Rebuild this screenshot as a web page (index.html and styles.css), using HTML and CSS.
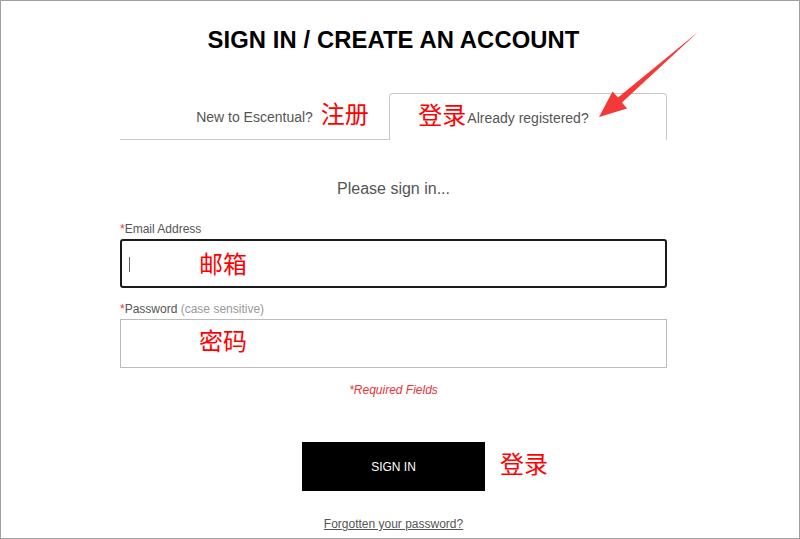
FILE: index.html
```html
<!DOCTYPE html>
<html>
<head>
<meta charset="utf-8">
<link rel="stylesheet" href="styles.css">
</head>
<body>
<div class="frame">
  <div class="panel">
    <h1 class="title">SIGN IN / CREATE AN ACCOUNT</h1>
    <div class="tabs">
      <div class="tab tab-new"><span class="tab-label">New to Escentual?<span class="note note-reg">注册</span></span></div>
      <div class="tab tab-active"><span class="tab-label"><span class="note note-login">登录</span>Already registered?</span></div>
    </div>
    <p class="intro">Please sign in...</p>
    <div class="field">
      <div class="label"><span class="req">*</span>Email Address</div>
      <div class="input input-focus"><span class="caret"></span><span class="note note-field">邮箱</span></div>
    </div>
    <div class="field field-pw">
      <div class="label"><span class="req">*</span>Password <span class="hint">(case sensitive)</span></div>
      <div class="input"><span class="note note-field">密码</span></div>
    </div>
    <p class="required">*Required Fields</p>
    <div class="actions">
      <div class="btn">SIGN IN<span class="note note-btn">登录</span></div>
    </div>
    <p class="forgot"><a href="#">Forgotten your password?</a></p>
  </div>
  <svg class="arrow" width="800" height="539" viewBox="0 0 800 539">
    <polygon points="698,32 618,97.5 612.5,91.5 599,117 627,108.5 622,102.5" fill="#f53838"/>
  </svg>
</div>
</body>
</html>
```

FILE: styles.css
```css
html, body {
  margin: 0;
  padding: 0;
  background: #fff;
}
body {
  font-family: "Liberation Sans", Arial, sans-serif;
  color: #555;
}
.frame {
  position: relative;
  width: 800px;
  height: 539px;
  box-sizing: border-box;
  border: 1px solid #a0a0a0;
  overflow: hidden;
}
.panel {
  width: 547px;
  margin-left: 119px;
  display: flex;
  flex-direction: column;
}
.title {
  margin: 26px 0 0;
  font-size: 23.8px;
  line-height: 26px;
  font-weight: bold;
  color: #000;
  text-align: center;
  letter-spacing: 0.1px;
}
.tabs {
  margin-top: 40px;
  display: flex;
  height: 47px;
}
.tab {
  box-sizing: border-box;
  display: flex;
  align-items: center;
  justify-content: center;
  font-size: 14px;
  color: #555;
}
.tab-new {
  width: 269px;
  border-bottom: 1px solid #c8c8c8;
  padding-top: 2px;
}
.tab-active {
  width: 278px;
  border: 1px solid #c8c8c8;
  border-bottom: none;
  border-radius: 4px 4px 0 0;
  padding-top: 1px;
}
.tab-label {
  position: relative;
}
.note {
  position: absolute;
  font-family: "Noto Sans CJK SC", sans-serif;
  font-size: 24px;
  line-height: 28px;
  color: #ff0000;
  white-space: nowrap;
}
.note-reg {
  left: calc(100% + 8px);
  top: -10px;
}
.note-login {
  right: calc(100% + 1px);
  top: -10px;
}
.intro {
  margin: 39px 0 0;
  font-size: 16px;
  line-height: 20px;
  text-align: center;
  color: #555;
}
.field {
  margin-top: 23px;
  display: flex;
  flex-direction: column;
}
.field-pw {
  margin-top: 14px;
}
.label {
  font-size: 12px;
  line-height: 14px;
  color: #555;
}
.req {
  color: #e8343a;
}
.hint {
  color: #999;
}
.input {
  position: relative;
  margin-top: 3px;
  height: 49px;
  box-sizing: border-box;
  border: 1px solid #bcbcbc;
}
.input-focus {
  border: 2px solid #1a1a1a;
  border-radius: 3px;
}
.caret {
  position: absolute;
  left: 7px;
  top: 16px;
  width: 1px;
  height: 15px;
  background: #666;
}
.note-field {
  left: 78px;
  top: 6px;
}
.input-focus .note-field {
  left: 77px;
  top: 8px;
}
.required {
  margin: 15px 0 0;
  font-size: 12px;
  line-height: 14px;
  font-style: italic;
  text-align: center;
  color: #e8343a;
}
.actions {
  margin-top: 45px;
  display: flex;
  justify-content: center;
}
.btn {
  position: relative;
  width: 183px;
  height: 49px;
  background: #000;
  color: #fff;
  font-size: 12px;
  display: flex;
  align-items: center;
  justify-content: center;
}
.note-btn {
  left: calc(100% + 15px);
  top: 7px;
}
.forgot {
  margin: 26px 0 0;
  font-size: 12px;
  line-height: 14px;
  text-align: center;
}
.forgot a {
  color: #555;
  text-decoration: underline;
}
.arrow {
  position: absolute;
  left: -1px;
  top: -1px;
  pointer-events: none;
}
```
